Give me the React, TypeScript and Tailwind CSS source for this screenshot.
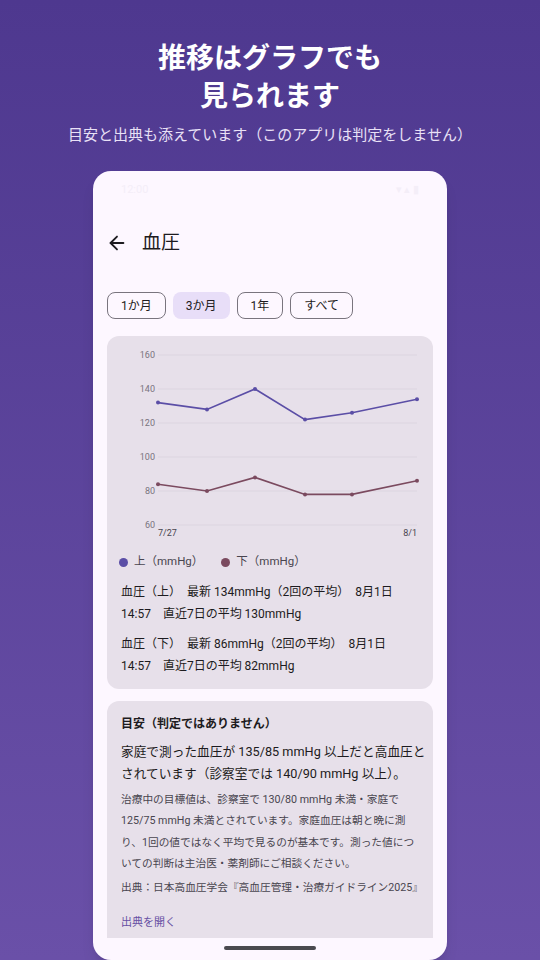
import { ArrowLeft } from "lucide-react";

const xs = [51, 100, 148, 198, 245, 310];
const upper = [132, 128, 140, 122, 126, 134];
const lower = [84, 80, 88, 78, 78, 86];
const yOf = (v: number) => 19 + (160 - v) * 1.7;

function Chart() {
  const grid = [160, 140, 120, 100, 80, 60];
  const pts = (vals: number[]) => vals.map((v, i) => `${xs[i]},${yOf(v)}`).join(" ");
  return (
    <svg width="326" height="208" viewBox="0 0 326 208" className="block">
      {grid.map((g) => (
        <g key={g}>
          <line x1={51} x2={310} y1={yOf(g)} y2={yOf(g)} stroke="#dcd5e0" strokeWidth="1" />
          <text x={48} y={yOf(g) + 3} textAnchor="end" fontSize="9" fill="#79747e">
            {g}
          </text>
        </g>
      ))}
      <polyline points={pts(upper)} fill="none" stroke="#5b4ea6" strokeWidth="1.6" />
      <polyline points={pts(lower)} fill="none" stroke="#7b4a5f" strokeWidth="1.6" />
      {upper.map((v, i) => (
        <circle key={"u" + i} cx={xs[i]} cy={yOf(v)} r="2" fill="#5b4ea6" />
      ))}
      {lower.map((v, i) => (
        <circle key={"l" + i} cx={xs[i]} cy={yOf(v)} r="2" fill="#7b4a5f" />
      ))}
      <text x={51} y={200} fontSize="9" fill="#49454f">
        7/27
      </text>
      <text x={310} y={200} fontSize="9" fill="#49454f" textAnchor="end">
        8/1
      </text>
    </svg>
  );
}

// * 期間切り替えのチップ
function Chip({ label, active }: { label: string; active?: boolean }) {
  return (
    <div
      className={
        active
          ? "h-[27px] px-[13px] flex items-center rounded-lg bg-[#e8def8] text-[12px] text-[#1d1b20]"
          : "h-[27px] px-[13px] flex items-center rounded-lg border border-[#79747e] text-[12px] text-[#1d1b20]"
      }
    >
      {label}
    </div>
  );
}

export default function App() {
  return (
    <div
      className="w-[540px] h-[960px] overflow-hidden bg-linear-to-b from-[#4e388f] to-[#6a50a8] flex flex-col items-center"
      style={{ fontFamily: 'Roboto, "Noto Sans CJK JP", sans-serif' }}
    >
      <div className="pt-[37px] text-center text-white font-bold text-[28px] leading-[38px]" style={{ fontFamily: '"Noto Sans CJK JP", sans-serif' }}>
        推移はグラフでも
        <br />
        見られます
      </div>
      <div className="mt-[10px] text-[15px] leading-[22px] text-[#e9e1f6]" style={{ fontFamily: '"Noto Sans CJK JP", sans-serif' }}>
        目安と出典も添えています（このアプリは判定をしません）
      </div>

      <div className="mt-[26px] w-[354px] h-[789px] shrink-0 rounded-[18px] bg-[#fdf7ff] overflow-hidden flex flex-col shadow-lg">
        <div className="h-[38px] px-[28px] flex items-center justify-between text-[11px] text-[#f4eef8]">
          <span>12:00</span>
          <span>▾ ▴ ▮</span>
        </div>
        <div className="flex-1 overflow-hidden px-[14px]">
          <div className="h-[68px] flex items-center gap-[14px]">
            <ArrowLeft size={22} strokeWidth={2} className="text-[#1d1b20] -ml-[1px]" />
            <span className="text-[19px] text-[#1d1b20]">血圧</span>
          </div>
          <div className="flex gap-[7px] mt-[15px]">
            <Chip label="1か月" />
            <Chip label="3か月" active />
            <Chip label="1年" />
            <Chip label="すべて" />
          </div>

          <div className="mt-[17px] rounded-xl bg-[#e7e0ea] pb-[12px]">
            <Chart />
            <div className="mt-[10px] pl-[12px] flex items-center text-[11.5px] text-[#49454f] h-[16px]">
              <span className="w-[9px] h-[9px] rounded-full bg-[#5b4ea6]" />
              <span className="ml-[6px]">上（mmHg）</span>
              <span className="ml-[18px] w-[9px] h-[9px] rounded-full bg-[#7b4a5f]" />
              <span className="ml-[6px]">下（mmHg）</span>
            </div>
            <div className="mt-[11px] px-[14px] text-[12px] leading-[22px] text-[#1d1b20] whitespace-nowrap">
              <div>
                血圧（上）　最新 134mmHg（2回の平均）　8月1日
                <br />
                14:57　直近7日の平均 130mmHg
              </div>
              <div className="mt-[8px]">
                血圧（下）　最新 86mmHg（2回の平均）　8月1日
                <br />
                14:57　直近7日の平均 82mmHg
              </div>
            </div>
          </div>

          <div className="mt-[12px] rounded-xl bg-[#e7e0ea] px-[14px] pt-[13px] pb-[16px] whitespace-nowrap overflow-hidden">
            <div className="text-[12px] leading-[20px] font-bold text-[#1d1b20]">目安（判定ではありません）</div>
            <div className="mt-[7px] text-[12.7px] leading-[22px] text-[#1d1b20]">
              家庭で測った血圧が 135/85 mmHg 以上だと高血圧と
              <br />
              されています（診察室では 140/90 mmHg 以上）。
            </div>
            <div className="mt-[4px] text-[10.7px] leading-[21.3px] text-[#49454f]">
              治療中の目標値は、診察室で 130/80 mmHg 未満・家庭で
              <br />
              125/75 mmHg 未満とされています。家庭血圧は朝と晩に測
              <br />
              り、1回の値ではなく平均で見るのが基本です。測った値につ
              <br />
              いての判断は主治医・薬剤師にご相談ください。
            </div>
            <div className="mt-[3px] text-[10.7px] leading-[21px] text-[#49454f]">
              出典：日本高血圧学会『高血圧管理・治療ガイドライン2025』
            </div>
            <div className="mt-[15px] text-[11px] leading-[20px] text-[#6750a4]">出典を開く</div>
          </div>
        </div>
        <div className="h-[22px] shrink-0 flex items-start justify-center pt-[8px]">
          <div className="w-[92px] h-[4px] rounded-full bg-[#4a4a4f]" />
        </div>
      </div>
    </div>
  );
}
